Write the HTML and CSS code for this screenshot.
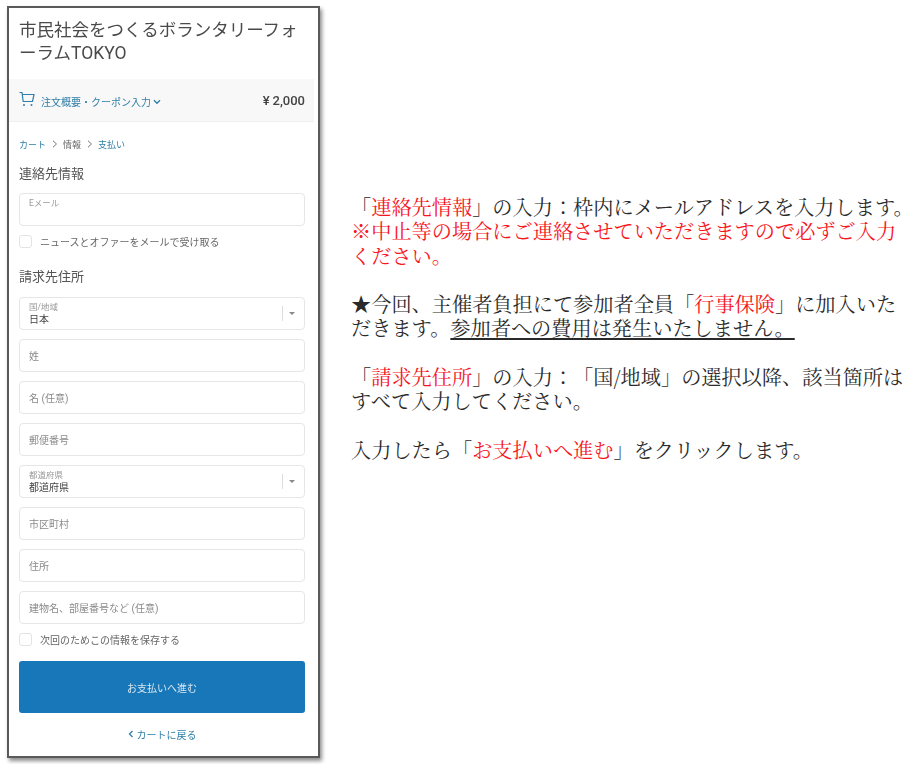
FILE: index.html
```html
<!DOCTYPE html>
<html lang="ja">
<head>
<meta charset="utf-8">
<title>市民社会をつくるボランタリーフォーラムTOKYO</title>
<link rel="stylesheet" href="styles.css">
</head>
<body>
<div class="page">
  <section class="phone">
    <h1 class="shop">市民社会をつくるボランタリーフォーラムTOKYO</h1>
    <div class="summary">
      <svg class="cart" viewBox="0 0 16 16" width="16" height="16" fill="none" stroke="currentColor" stroke-width="1.2">
        <path d="M0.5 1.5H3L4.2 10.5H13.5L15 3.5H3.3"/>
        <circle cx="5" cy="14" r="1" fill="currentColor" stroke="none"/>
        <circle cx="12.5" cy="14" r="1" fill="currentColor" stroke="none"/>
      </svg>
      <span class="summary-label">注文概要・クーポン入力</span>
      <svg class="chev" viewBox="0 0 8 6" width="8" height="6" fill="none" stroke="currentColor" stroke-width="1.4"><path d="M1 1.2L4 4.2L7 1.2"/></svg>
      <span class="price"><span class="yen">¥</span>2,000</span>
    </div>
    <div class="form">
      <nav class="crumbs">
        <span class="link">カート</span>
        <svg class="sep" viewBox="0 0 6 8" width="6" height="8" fill="none" stroke="currentColor"><path d="M1 .8L4.5 4L1 7.2"/></svg>
        <span>情報</span>
        <svg class="sep" viewBox="0 0 6 8" width="6" height="8" fill="none" stroke="currentColor"><path d="M1 .8L4.5 4L1 7.2"/></svg>
        <span class="link">支払い</span>
      </nav>
      <h2 class="heading first">連絡先情報</h2>
      <div class="field float"><span class="mini">Eメール</span></div>
      <label class="check first-check"><span class="box"></span>ニュースとオファーをメールで受け取る</label>
      <h2 class="heading second">請求先住所</h2>
      <div class="fields">
        <div class="field float select"><span class="mini">国/地域</span><span class="value">日本</span><i class="divider"></i><i class="arrow"></i></div>
        <div class="field">姓</div>
        <div class="field">名 (任意)</div>
        <div class="field">郵便番号</div>
        <div class="field float select"><span class="mini">都道府県</span><span class="value">都道府県</span><i class="divider"></i><i class="arrow"></i></div>
        <div class="field">市区町村</div>
        <div class="field">住所</div>
        <div class="field">建物名、部屋番号など (任意)</div>
      </div>
      <label class="check save-check"><span class="box"></span>次回のためこの情報を保存する</label>
      <div class="button">お支払いへ進む</div>
      <div class="back">
        <svg viewBox="0 0 6 8" width="6" height="8" fill="none" stroke="currentColor" stroke-width="1.3"><path d="M4.5 1L1.5 4L4.5 7"/></svg>
        <span>カートに戻る</span>
      </div>
    </div>
  </section>
  <section class="notes">
    <p>「<em>連絡先情報</em>」の入力：枠内にメールアドレスを入力します。<br><em>※中止等の場合にご連絡させていただきますので必ずご入力<br>ください。</em></p>
    <p>★今回、主催者負担にて参加者全員「<em>行事保険</em>」に加入いた<br>だきます。<u>参加者への費用は発生いたしません。</u></p>
    <p>「<em>請求先住所</em>」の入力：「国/地域」の選択以降、該当箇所は<br>すべて入力してください。</p>
    <p>入力したら「<em>お支払いへ進む</em>」をクリックします。</p>
  </section>
</div>
</body>
</html>
```
FILE: styles.css
```css
* { box-sizing: border-box; }
html, body { margin: 0; padding: 0; background: #fff; }
.page {
  display: flex;
  align-items: flex-start;
  width: 924px;
  height: 764px;
  overflow: hidden;
  font-family: Roboto, "Noto Sans CJK JP", sans-serif;
}
.phone {
  flex: none;
  width: 313px;
  height: 752px;
  margin: 6px 0 0 7px;
  border: 2px solid #5a5a5a;
  background: #fff;
  box-shadow: 2px 3px 4px rgba(0,0,0,.45);
  filter: blur(.3px);
}
.shop {
  margin: 0;
  padding: 11px 16px 14px 10px;
  font-size: 17.5px;
  line-height: 23px;
  font-weight: 400;
  color: #4a4a4a;
}
.summary {
  display: flex;
  align-items: center;
  height: 43px;
  margin-right: 4px;
  padding: 0 9px 0 10px;
  background: #f8f8f8;
  border-bottom: 1px solid #efefef;
  color: #2f7fa8;
  font-size: 10px;
}
.cart { flex: none; margin-right: 6px; margin-top: -3px; }
.summary-label { margin-top: 2px; }
.chev { margin-left: 2px; margin-top: 3px; }
.price { margin-left: auto; font-size: 13px; font-weight: 500; color: #444; }
.yen { margin-right: 3px; }
.form { padding: 0 13px 0 10px; }
.crumbs {
  display: flex;
  align-items: center;
  gap: 5.5px;
  height: 12px;
  margin-top: 16px;
  font-size: 9px;
  color: #666;
}
.crumbs .link { color: #2f7fa8; }
.crumbs .sep { color: #777; }
.heading {
  margin: 16px 0 11px;
  font-size: 13px;
  line-height: 16px;
  font-weight: 400;
  color: #555;
}
.heading.second { margin: 21px 0 12px; }
.fields { display: flex; flex-direction: column; gap: 9px; }
.field {
  position: relative;
  display: flex;
  align-items: center;
  height: 33px;
  padding: 0 9px;
  border: 1px solid #e6e6e6;
  border-radius: 4px;
  font-size: 10px;
  color: #8a8a8a;
}
.field.float { flex-direction: column; align-items: flex-start; justify-content: flex-start; padding-top: 3px; }
.mini { font-size: 8.5px; line-height: 13px; color: #999; }
.value { font-size: 10px; line-height: 12px; color: #444; }
.divider { position: absolute; right: 21px; top: 8px; height: 15px; border-left: 1px solid #ddd; }
.arrow {
  position: absolute;
  right: 9px;
  top: 14px;
  border: 3px solid transparent;
  border-top: 3.5px solid #888;
  border-bottom: 0;
}
.check {
  display: flex;
  align-items: center;
  height: 13px;
  font-size: 10px;
  color: #666;
}
.first-check { margin-top: 9px; }
.save-check { margin-top: 9px; }
.box {
  flex: none;
  width: 13px;
  height: 13px;
  margin-right: 8px;
  border: 1px solid #e3e3e3;
  border-radius: 3px;
}
.button {
  display: flex;
  align-items: center;
  justify-content: center;
  height: 52px;
  margin-top: 15px;
  border-radius: 3px;
  background: #1877b8;
  font-size: 10px;
  color: #d8e8f2;
}
.back {
  display: flex;
  align-items: center;
  justify-content: center;
  gap: 3px;
  height: 12px;
  margin-top: 15px;
  font-size: 10px;
  color: #2f7fa8;
}
.notes {
  flex: none;
  width: 570px;
  margin-left: 31px;
  padding-top: 195px;
  font-family: "Noto Serif CJK JP", "Liberation Serif", "Noto Sans CJK JP", serif;
  font-size: 20.2px;
  line-height: 24.3px;
  color: #2a2a2a;
  white-space: nowrap;
  text-spacing-trim: space-all;
}
.notes p { margin: 0 0 24.3px; }
.notes em { font-style: normal; color: #f8141c; }
.notes u { text-underline-offset: 2px; }
```
